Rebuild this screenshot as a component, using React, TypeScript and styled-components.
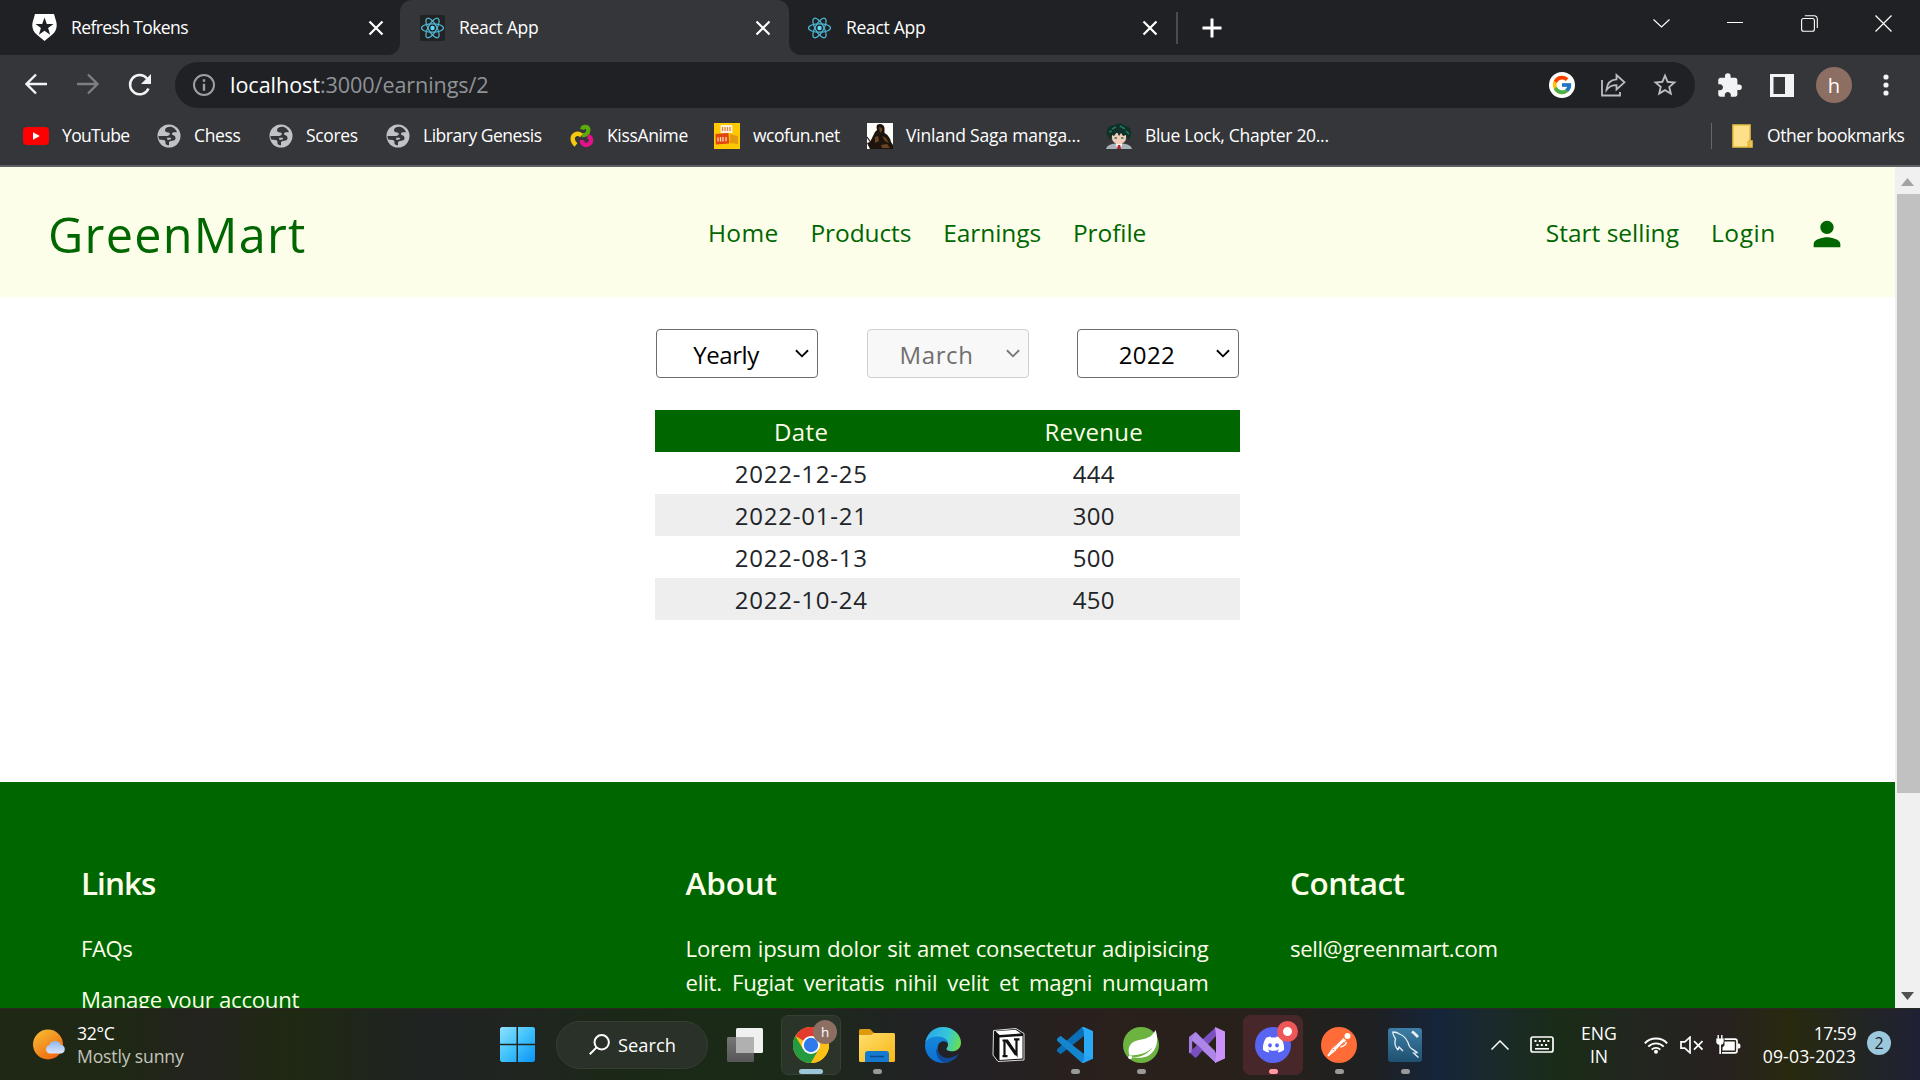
import React from "react";
import styled, { createGlobalStyle } from "styled-components";
import { FcGoogle } from "react-icons/fc";
import { FaDiscord } from "react-icons/fa";
import { MdExtension, MdPerson, MdStarBorder } from "react-icons/md";

const GREEN = "#006600";
const CREAM = "#fdfeea";

const GlobalStyle = createGlobalStyle`
  * { box-sizing: border-box; }
  body { margin: 0; overflow: hidden; }
  svg { display: block; flex: none; }
`;

const Screen = styled.div`
  width: 1920px;
  height: 1080px;
  display: flex;
  flex-direction: column;
  overflow: hidden;
  font-family: "Open Sans", "Noto Sans", sans-serif;
  background: #fff;
`;

const Label = styled.span<{ $ls?: number }>`
  letter-spacing: ${(p) => p.$ls ?? 0}px;
  white-space: nowrap;
`;

/* ---------- browser chrome ---------- */

const TabStrip = styled.div`
  height: 55px;
  display: flex;
  background: #35363a;
  color: #fff;
`;

const Tab = styled.div<{ $w: number; $side: "left" | "right" }>`
  width: ${(p) => p.$w}px;
  height: 55px;
  display: flex;
  align-items: center;
  padding: 0 ${(p) => (p.$side === "left" ? "16px 0 32px" : "17px 0 18px")};
  background: #202124;
  border-radius: ${(p) => (p.$side === "left" ? "0 0 12px 0" : "0 0 0 12px")};
  font-size: 17.5px;
  line-height: 54px;
`;

const TabEdge = styled.div`
  display: flex;
  background: #202124;
`;

const ActiveTab = styled.div`
  width: 389px;
  height: 55px;
  display: flex;
  align-items: center;
  padding: 0 18px 0 20px;
  background: #35363a;
  border-radius: 12px 12px 0 0;
  font-size: 17.5px;
  line-height: 54px;
`;

const TabTitle = styled(Label)`
  flex: 1;
  margin-left: 14px;
  height: 55px;
`;

const TabTools = styled.div`
  flex: 1;
  display: flex;
  align-items: center;
  background: #202124;
`;

const TabDivider = styled.div`
  width: 2px;
  height: 32px;
  background: #4b4c50;
  margin: 0 24px 0 1px;
`;

const WindowButtons = styled.div`
  margin-left: auto;
  display: grid;
  grid-template-columns: 74px 74px 74px 74px;
  justify-items: center;
  align-items: center;
  height: 46px;
  align-self: flex-start;
`;

const Toolbar = styled.div`
  height: 60px;
  padding-left: 25px;
  display: flex;
  align-items: center;
  background: #35363a;
`;

const NavButtons = styled.div`
  width: 150px;
  display: flex;
  gap: 29.5px;
`;

const Omnibox = styled.div`
  width: 1520px;
  height: 46px;
  border-radius: 23px;
  padding: 0 16px 0 17px;
  display: flex;
  align-items: center;
  background: #202124;
  font-size: 21.6px;
  line-height: 46px;
  color: #8f9398;
`;

const Host = styled(Label)`
  margin-left: 14px;
  color: #fff;
`;

const OmniActions = styled.div`
  margin-left: auto;
  display: flex;
  align-items: center;
  gap: 25px;
`;

const GoogleChip = styled.div`
  width: 26px;
  height: 26px;
  margin-right: 1px;
  border-radius: 50%;
  background: #fff;
  display: grid;
  place-items: center;
`;

const ToolbarActions = styled.div`
  flex: 1;
  padding-left: 21px;
  display: flex;
  align-items: center;
`;

const PanelWrap = styled.div`
  margin: 0 22px 0 27px;
`;

const Avatar = styled.div<{ $size: number }>`
  width: ${(p) => p.$size}px;
  height: ${(p) => p.$size}px;
  border-radius: 50%;
  background: #8d6e63;
  color: #fff;
  text-align: center;
  font-size: ${(p) => p.$size * 0.56}px;
  line-height: ${(p) => p.$size}px;
`;

const MenuDots = styled.svg`
  margin-left: 31px;
`;

const BookmarksBar = styled.div`
  height: 52px;
  padding: 0 0 9px 23px;
  display: flex;
  align-items: center;
  background: #35363a;
  color: #fff;
  font-size: 17.5px;
  line-height: 41px;
  border-bottom: 2px solid #5f6065;
`;

const Bookmark = styled.div<{ $w: number }>`
  width: ${(p) => p.$w}px;
  height: 41px;
  display: flex;
  align-items: center;
  gap: 13px;
`;

const BookmarkDivider = styled.div`
  width: 1px;
  height: 26px;
  margin: 0 20px 0 auto;
  background: #66676b;
`;

const OtherBookmarks = styled.div`
  width: 188px;
  height: 41px;
  display: flex;
  align-items: center;
  gap: 14px;
`;

/* ---------- web page ---------- */

const Viewport = styled.div`
  height: 841px;
  display: flex;
  overflow: hidden;
`;

const Page = styled.div`
  width: 1895px;
  height: 841px;
  display: flex;
  flex-direction: column;
  overflow: hidden;
`;

const Header = styled.header`
  height: 130px;
  flex: none;
  display: flex;
  align-items: center;
  background: ${CREAM};
  color: ${GREEN};
  font-size: 24.5px;
`;

const Brand = styled.h1`
  width: 662px;
  margin: 0;
  padding: 4px 0 0 48px;
  font-size: 48.5px;
  font-weight: 400;
  line-height: 127px;
  letter-spacing: 1.3px;
`;

const Nav = styled.nav<{ $end?: boolean }>`
  display: flex;
  align-items: center;
  gap: 32px;
  padding-top: 2px;
  line-height: 128px;
  ${(p) => (p.$end ? "margin-left: auto; padding-right: 48px;" : "padding-left: 46px;")}
`;

const AccountIcon = styled.span`
  margin: 2px 0 0 -1px;
`;

const Main = styled.main`
  width: 585px;
  height: 485px;
  flex: none;
  margin-left: 655px;
  padding-top: 32px;
`;

const Filters = styled.div`
  display: flex;
  justify-content: space-between;
  padding: 0 1px;
  margin-bottom: 32px;
`;

const Select = styled.div<{ $disabled?: boolean }>`
  width: 162px;
  height: 49px;
  display: flex;
  align-items: center;
  padding-right: 8px;
  border: 1px solid ${(p) => (p.$disabled ? "#cfcfcf" : "#6c6c6c")};
  border-radius: 4px;
  background: ${(p) => (p.$disabled ? "#f8f8f8" : "#fff")};
  color: ${(p) => (p.$disabled ? "#6f6f6f" : "#000")};
  font-size: 24px;
  line-height: 46px;
`;

const SelectValue = styled(Label)`
  flex: 1;
  text-align: center;
  padding-top: 2px;
`;

const Table = styled.div`
  display: grid;
  grid-auto-rows: 42px;
  font-size: 24px;
  line-height: 43px;
  color: #212529;
`;

const Row = styled.div<{ $tone?: "head" | "shade" }>`
  display: grid;
  grid-template-columns: 1fr 1fr;
  text-align: center;
  background: ${(p) => (p.$tone === "head" ? GREEN : p.$tone === "shade" ? "#eeeeee" : "#fff")};
  color: ${(p) => (p.$tone === "head" ? CREAM : "inherit")};
`;

const Footer = styled.footer`
  height: 226px;
  flex: none;
  display: grid;
  grid-template-columns: 523px 523px 523px;
  column-gap: 81.5px;
  align-items: start;
  padding: 76px 0 0 81px;
  background: ${GREEN};
  color: ${CREAM};
  font-size: 22.2px;
  line-height: 34px;
  overflow: hidden;
`;

const FooterTitle = styled.h2`
  margin: 0 0 24px;
  font-size: 31.5px;
  font-weight: 600;
  line-height: 50px;
`;

const FooterLine = styled.p`
  margin: 0 0 17px;
`;

const FooterText = styled.p`
  margin: 0;
  text-align: justify;
  text-align-last: justify;
  letter-spacing: -0.2px;
`;

const Scrollbar = styled.div`
  width: 25px;
  display: flex;
  flex-direction: column;
  align-items: center;
  background: #f0f0f0;
  padding: 11px 0 8px;
`;

const Thumb = styled.div`
  width: 23px;
  height: 599px;
  margin: 8px 0 auto 2px;
  background: #c1c1c1;
`;

/* ---------- taskbar ---------- */

const Taskbar = styled.div`
  height: 72px;
  display: flex;
  align-items: center;
  color: #fff;
  font-size: 17.6px;
  border-top: 1px solid #2b2a22;
  background: linear-gradient(90deg, #1f2815 0, #1f2715 130px, #24231f 200px, #1f2912 290px, #1f2322 430px,
    #202520 520px, #1b2817 620px, #1b2a18 780px, #222126 940px, #2a201c 1110px, #272119 1250px, #1f2022 1370px,
    #15253a 1440px, #1a2a2c 1490px, #1a2c17 1560px, #22261f 1640px, #272120 1720px, #29290f 1790px,
    #222620 1850px, #1f2134 1920px);
`;

const Weather = styled.div`
  width: 484px;
  padding-left: 33px;
  display: flex;
  align-items: center;
  gap: 10px;
`;

const TwoLines = styled.div<{ $align?: string; $w?: number }>`
  display: flex;
  flex-direction: column;
  text-align: ${(p) => p.$align ?? "left"};
  ${(p) => (p.$w ? `width: ${p.$w}px;` : "")}
  line-height: 23px;
`;

const Muted = styled(Label)`
  color: #c3c5bd;
`;

const Slot = styled.div<{ $w?: number }>`
  width: ${(p) => p.$w ?? 66}px;
  display: flex;
  justify-content: center;
`;

const SearchPill = styled.div`
  width: 152px;
  height: 48px;
  margin-left: 2px;
  padding-left: 32px;
  display: flex;
  align-items: center;
  gap: 8px;
  border: 1px solid #363d33;
  border-radius: 24px;
  background: #2a3128;
  font-size: 18.3px;
  line-height: 48px;
`;

const AppTile = styled.div<{ $bg?: string; $edge?: string }>`
  position: relative;
  width: 60px;
  height: 60px;
  display: flex;
  flex-direction: column;
  align-items: center;
  padding-top: 11px;
  border: 1px solid ${(p) => p.$edge ?? "transparent"};
  border-radius: 7px;
  background: ${(p) => p.$bg ?? "transparent"};
`;

const Indicator = styled.div<{ $w?: number; $color?: string }>`
  width: ${(p) => p.$w ?? 9}px;
  height: 5px;
  margin-top: 6px;
  border-radius: 3px;
  background: ${(p) => p.$color ?? "#999"};
`;

const TileBadge = styled.div`
  position: absolute;
  top: 4px;
  right: 3px;
`;

const RecordDot = styled.div`
  width: 21px;
  height: 21px;
  margin: 1px 1px 0 0;
  border: 6px solid #ef5658;
  border-radius: 50%;
  background: #fff;
`;

const Disc = styled.div<{ $color: string }>`
  width: 36px;
  height: 36px;
  border-radius: 50%;
  background: ${(p) => p.$color};
  display: grid;
  place-items: center;
`;

const MySqlWrap = styled.div`
  height: 36px;
  padding-top: 1px;
`;

const Tray = styled.div`
  flex: 1;
  display: flex;
  align-items: center;
`;

const TrayIcon = styled.div<{ $ml: number }>`
  margin-left: ${(p) => p.$ml}px;
`;

const Notice = styled.div`
  width: 24px;
  height: 24px;
  margin: -3px 0 0 11px;
  border-radius: 50%;
  background: #9cc8dd;
  color: #1a1a1a;
  text-align: center;
  font-size: 16px;
  line-height: 24px;
`;

/* ---------- drawings ---------- */

const CloseX = () => (
  <svg width="16" height="16" viewBox="0 0 16 16" stroke="#fff" strokeWidth="2.2">
    <path d="M1.5 1.5l13 13M14.5 1.5l-13 13" />
  </svg>
);

const AuthShield = () => (
  <svg width="25" height="27" viewBox="0 0 25 27">
    <path d="M3 0h19l2.300 8c1.200 5-.5 9.500-4 12.500L12.500 27l-7.800-6.500C1.200 17.500-.5 13 .7 8z" fill="#fff" />
    <path d="M12.500 3.500l2.300 6.500h6.700l-5.400 4.100 2 6.700-5.600-4-5.600 4 2-6.700L3.500 10h6.700z" fill="#202124" />
  </svg>
);

const ReactLogo = ({ boxed }: { boxed?: boolean }) => (
  <svg width="25" height="26" viewBox="-12.500 -13 25 26">
    {boxed && <rect x="-12.500" y="-13" width="25" height="26" rx="2" fill="#222" />}
    <circle r="2.200" fill="#61dafb" />
    <g fill="none" stroke="#4fb9d6" strokeWidth="1.200">
      <ellipse rx="11" ry="4.200" />
      <ellipse rx="11" ry="4.200" transform="rotate(60)" />
      <ellipse rx="11" ry="4.200" transform="rotate(120)" />
    </g>
  </svg>
);

const ArrowIcon = ({ flip, color }: { flip?: boolean; color: string }) => (
  <svg width="22" height="22" viewBox="0 0 22 22" fill="none" stroke={color} strokeWidth="2.400">
    <path d={flip ? "M0 11h20M11 1.500l9.500 9.500-9.500 9.500" : "M22 11H2M11 1.500L1.500 11l9.500 9.500"} />
  </svg>
);

const ReloadIcon = () => (
  <svg width="24" height="24" viewBox="0 0 24 24">
    <path d="M20.500 15.500A9.600 9.600 0 1 1 19 5.500" fill="none" stroke="#f1f3f4" strokeWidth="2.500" />
    <path d="M23 1v10H13z" fill="#f1f3f4" />
  </svg>
);

const InfoIcon = () => (
  <svg width="24" height="24" viewBox="0 0 24 24">
    <circle cx="12" cy="12" r="10" fill="none" stroke="#9aa0a6" strokeWidth="2" />
    <path d="M10.800 6.300h2.400v2.400h-2.400zM10.800 10.700h2.400v7h-2.400z" fill="#9aa0a6" />
  </svg>
);

const ShareIcon = () => (
  <svg width="25" height="24" viewBox="0 0 25 24" fill="none" stroke="#b9bcc0" strokeWidth="1.800">
    <path d="M1 7v15.500h18V19" />
    <path d="M5.500 17C6 10 9.500 6.600 15.500 6.300V2l8 7.300-8 7.200v-4.300c-4.500 0-7.500 1.300-10 4.800z" />
  </svg>
);

const Globe = () => (
  <svg width="24" height="24" viewBox="0 0 24 24">
    <circle cx="12" cy="12" r="11.500" fill="#bfc3c8" />
    <path
      d="M14 2.800C10.500 2.500 8 4 8 6.300c0 1.500 1.200 2 3 2.200 1.700.2 2.300 1 1.500 2.200-.6.900-1.800 1.300-3.500 1.300H1.500c0 1.500.3 2.500.8 3.500l4.200.5c1.500.2 2 1 2 2.300V20c1 .8 2 1.200 3.500 1.300V19c0-1.200.8-1.800 2-2l2.500-.5c1.500-.4 2.200-1.400 2-2.800-.2-1.300-1-2-2.300-2.400-1.400-.5-1.500-1.500-.6-2.500.8-.9 2.500-.6 4.400-.6-1-2.800-3-4.500-6-5.400z"
      fill="#35363a"
    />
    <path d="M10 13.800h3.200c1.300 0 1.300 1.500 0 1.700l-2.700.5z" fill="#bfc3c8" />
  </svg>
);

const YouTubeIcon = () => (
  <svg width="26" height="18" viewBox="0 0 26 18">
    <rect width="26" height="18" rx="4" fill="#f00" />
    <path d="M10 5.200v7.600l6.800-3.800z" fill="#fff" />
  </svg>
);

const KissIcon = () => (
  <svg width="25" height="24" viewBox="-1 0 25 24" fill="none" strokeWidth="4.400">
    <path d="M12 5.500C13 1.800 18.500 1.800 18.300 6.500c-.2 3.500-3.500 5-6.300 4.500" stroke="#5bab0a" />
    <path d="M17.500 12.500c4.500.5 4.500 5.500 1.500 7.500-3.500 2.200-7.500 0-7-4" stroke="#e3128b" />
    <path d="M11.500 11.500C7.500 8 2.500 10.500 2.700 15c.1 2.500 1.500 4.500 3.300 6" stroke="#f6c90e" />
  </svg>
);

const WcoIcon = () => (
  <svg width="26" height="26" viewBox="0 0 26 26">
    <rect width="26" height="26" fill="#ffc800" />
    <rect x="6.500" y="2" width="12" height="8" rx="1" fill="#fff0d8" />
    <path d="M8.500 4v4M11 4v4M13.500 4v4M16 4v4" stroke="#d98142" strokeWidth="1.300" />
    <path d="M1.500 11l13-1 .8 10.500-13.500 1z" fill="#e2460f" />
    <path d="M4 18.500v-4M6.500 18.500v-4.500M9 18.500V14M12 18.300V14" stroke="#ffd9b0" strokeWidth="1.300" />
    <path d="M16 11l8 2v8l-8-1z" fill="#e39a10" />
  </svg>
);

const VinlandIcon = () => (
  <svg width="26" height="26" viewBox="0 0 26 26">
    <rect width="26" height="26" fill="#fdfdfb" />
    <path d="M10 2c3-2 7-.5 7.500 3v5c4 2 6 6 6.500 9l2 3v4H3l-3-6 3-1 3-6 2-4 2-2-.5-3z" fill="#1d150d" />
    <path d="M12 4l3 1v3l-2 2zM15 13l4 2 3 5-4-2zM8 14l3-1 1 5-4 2zM14 22l6-1 3 4h-8z" fill="#6b4521" />
    <path d="M0 14l5 7" stroke="#1d150d" strokeWidth="1.200" />
  </svg>
);

const BlueLockIcon = () => (
  <svg width="26" height="26" viewBox="0 0 26 26">
    <path d="M0 26c1-4 5-5 9-5.500h8c4 .5 8 1.500 9 5.500z" fill="#a9b2b8" />
    <path d="M10 19h6v4l-3 3-3-3z" fill="#f4f4f4" />
    <path d="M12 22h2.200l.8 4h-4z" fill="#b3202a" />
    <path d="M6 10h14v5c0 4-4 6-7 6s-7-2-7-6z" fill="#f0cdb8" />
    <path d="M1 12C-.5 6 4 1.500 9 2c3-2.500 8-1.500 10 1 5 0 7 5 6 9l-2 5-3-5-3 1-2-3-2 3-2-4-3 4-2-1-2 5z" fill="#10302a" />
    <path d="M6 6l4-2M14 3l5 3M20 8l3 3M3 9l3-1" stroke="#1f7a56" strokeWidth="1.500" />
    <path d="M8.500 15h2.500M15 15h2.500" stroke="#27745a" strokeWidth="1.600" />
  </svg>
);

const FolderMark = () => (
  <svg width="21" height="24" viewBox="0 0 21 24">
    <path d="M1 1h17v16h2v6H1z" fill="#ffe08a" stroke="#e9c044" strokeWidth="1.600" />
    <path d="M16 23v-5.500l2-1.500v6z" fill="#f2cb55" stroke="#d9a92b" />
  </svg>
);

const SidePanelIcon = () => (
  <svg width="24" height="23" viewBox="0 0 24 23">
    <path d="M0 0h24v23H0zM3.500 3v17H15V3z" fill="#f1f3f4" fillRule="evenodd" />
  </svg>
);

const Chevron = ({ color = "#000" }: { color?: string }) => (
  <svg width="14" height="9" viewBox="0 0 15 9" fill="none" stroke={color} strokeWidth="2">
    <path d="M1 1l6.500 6.500L14 1" />
  </svg>
);

const Triangle = ({ down }: { down?: boolean }) => (
  <svg width="13" height="8" viewBox="0 0 13 8">
    <path d={down ? "M0 0h13L6.500 8z" : "M0 8h13L6.500 0z"} fill={down ? "#505050" : "#a3a3a3"} />
  </svg>
);

const SunCloud = () => (
  <svg width="34" height="32" viewBox="0 0 34 32">
    <defs>
      <linearGradient id="sun" x1="0" y1="0" x2=".7" y2="1">
        <stop offset="0" stopColor="#f6c235" />
        <stop offset="1" stopColor="#f0670f" />
      </linearGradient>
      <linearGradient id="cloud" x1="0" y1="0" x2="0" y2="1">
        <stop offset="0" stopColor="#8fb4ef" />
        <stop offset="1" stopColor="#dbe7fb" />
      </linearGradient>
    </defs>
    <circle cx="15" cy="15.500" r="15" fill="url(#sun)" />
    <path d="M16.500 24.500a4.400 4.400 0 0 1 0-8.600c1-5 9.500-5.300 11.300-.2a4.500 4.500 0 0 1 .7 8.800z" fill="url(#cloud)" />
  </svg>
);

const WindowsLogo = () => (
  <svg width="35" height="35" viewBox="0 0 35 35">
    <defs>
      <linearGradient id="win" gradientUnits="userSpaceOnUse" x1="0" y1="0" x2="35" y2="35">
        <stop offset="0" stopColor="#8fe0ff" />
        <stop offset=".5" stopColor="#3fc2fb" />
        <stop offset="1" stopColor="#0a93f7" />
      </linearGradient>
    </defs>
    <path d="M1.500 0h15v16.800H0V1.500zM18 0h15.500L35 1.500v15.300H18zM0 18.300h16.500V35h-15L0 33.500zM18 18.300h17v15.200L33.500 35H18z" fill="url(#win)" />
  </svg>
);

const SearchGlyph = () => (
  <svg width="21" height="21" viewBox="0 0 21 21" fill="none" stroke="#fff" strokeWidth="2">
    <circle cx="12.700" cy="8.300" r="7.200" />
    <path d="M7.600 13.400L.8 20.200" />
  </svg>
);

const TaskView = () => (
  <svg width="36" height="34" viewBox="0 0 36 34">
    <defs>
      <linearGradient id="tv" x1="0" y1="0" x2="0" y2="1">
        <stop offset="0" stopColor="#777" />
        <stop offset="1" stopColor="#555" />
      </linearGradient>
    </defs>
    <rect y="9" width="27" height="25" rx="1.500" fill="url(#tv)" />
    <rect x="9" width="27" height="25" rx="1.500" fill="#f0f0f0" />
    <path d="M9 9h18v16H9z" fill="#b0b0b0" />
  </svg>
);

const ChromeLogo = () => (
  <svg width="36" height="36" viewBox="0 0 36 36">
    <circle cx="18" cy="18" r="18" fill="#fbc116" />
    <path d="M18 18L2.410 9A18 18 0 0 1 33.590 9H18z" fill="#e33b2e" />
    <path d="M2.410 9A18 18 0 0 0 18 36l7.800-13.500L18 18l-7.800 4.500z" fill="#249a41" />
    <path d="M18 9h15.600A18 18 0 0 1 18 36l7.800-13.500z" fill="#fbc116" />
    <circle cx="18" cy="18" r="9" fill="#fff" />
    <circle cx="18" cy="18" r="7.200" fill="#2f7bee" />
  </svg>
);

const ExplorerIcon = () => (
  <svg width="36" height="36" viewBox="0 0 36 36">
    <defs>
      <linearGradient id="fold" x1="0" y1="0" x2="1" y2="1">
        <stop offset="0" stopColor="#ffdd6e" />
        <stop offset="1" stopColor="#f8b814" />
      </linearGradient>
    </defs>
    <path d="M0 3.500Q0 2 1.500 2H11l4 4v4H0z" fill="#dd9a0a" />
    <path d="M0 8h12l3-2h19.500Q36 6 36 7.500v26q0 1.500-1.500 1.500h-33Q0 35 0 33.500z" fill="url(#fold)" />
    <path d="M6 35v-8q0-3 3-3h18q3 0 3 3v8z" fill="#1479cf" />
    <path d="M11 29.500h14" stroke="#0b4a8c" strokeWidth="1.500" />
  </svg>
);

const EdgeLogo = () => (
  <svg width="36" height="36" viewBox="0 0 36 36">
    <defs>
      <linearGradient id="edgeTop" x1="0" y1=".4" x2="1" y2=".6">
        <stop offset="0" stopColor="#2aa6ea" />
        <stop offset=".6" stopColor="#35c8d8" />
        <stop offset="1" stopColor="#6be04a" />
      </linearGradient>
      <linearGradient id="edgeLow" x1="0" y1="0" x2="0" y2="1">
        <stop offset="0" stopColor="#1488dc" />
        <stop offset="1" stopColor="#0d6fd0" />
      </linearGradient>
    </defs>
    <path d="M0 17C1 7 8.500 0 18 0c10.500 0 18 8 18 15.500 0 5.500-4 8.800-9 8.800-4 0-5.500-1.300-5.500-2.500 0-1 1.500-1.600 1.500-4.300 0-4-4-7.500-10-7.500C6 10 2 13 0 17z" fill="url(#edgeTop)" />
    <path d="M0 18C1 12.500 6 9.500 12.500 9.500c5.500 0 10 3 10.500 7-2-3-8-3.500-10 2-1.500 6 2 13.500 9 17C10 38-.5 29.500 0 18z" fill="url(#edgeLow)" />
    <path d="M12.500 20c-.5 8 7 12.500 13.500 10.500 3-.8 5.500-2 7.500-3.500-2 4.500-7 8.500-13.500 9-7-2-11-11-7.500-16z" fill="#114a94" />
  </svg>
);

const NotionLogo = () => (
  <svg width="36" height="36" viewBox="0 0 36 36">
    <path d="M2.500 3.500L25 1.500l8 5V33l-26 1.500-5-6.500z" fill="#111" stroke="#ddd" strokeWidth="1" />
    <path d="M4.500 4.200L24.500 2.700l5.500 3.800-21.500 1.600z" fill="#fff" />
    <path d="M8.500 10.500L31.500 9v22.500l-23 1.500z" fill="#fff" />
    <path d="M13.500 29V13.500h2.800L25.500 27V12.500M11.500 13.500h5M23 12.300h5.500M11.500 29.200h5" fill="none" stroke="#111" strokeWidth="2.200" />
    <path d="M13.500 13.500l3-.3 10 14.500-2.500.8z" fill="#111" />
  </svg>
);

const CodeLogo = () => (
  <svg width="36" height="36" viewBox="0 0 36 36">
    <path d="M27 9L3.500 27.200 0 24.300v-2L24.500.5 27 0z" fill="#0b6fb8" />
    <path d="M27 27L3.500 8.800 0 11.700v2l24.500 21.800L27 36z" fill="#1486d0" />
    <path d="M26.500 0L36 4.200v27.600L26.500 36 24.500 35.200 27 33V3l-2.500-2.200z" fill="#27a3f2" />
    <path d="M27 9v18L36 31.800V4.200L26.500 0z" fill="#2aa9f5" />
  </svg>
);

const SpringLogo = () => (
  <svg width="36" height="36" viewBox="0 0 36 36">
    <circle cx="18" cy="18" r="18" fill="#6db33f" />
    <path d="M32.500 3c3.500 9 1.500 20-6 25-5.500 3.500-12.500 3-18 2.500 10 0 17-4 21-10-5 5-10.500 7.500-23 8C3.500 20 8 14.500 16 13c7-1.200 13-2.500 16.500-10z" fill="#fff" />
    <circle cx="7.200" cy="30.300" r="1.900" fill="#fff" />
  </svg>
);

const StudioLogo = () => (
  <svg width="36" height="36" viewBox="0 0 36 36">
    <path d="M0 10l6.500-5L10 7.500v21L6.500 31 0 26z" fill="#52338f" />
    <path d="M0 10l6.500-5L27 26v10L3.500 14.500v11L0 26z" fill="#a57be0" />
    <path d="M6.500 31L27 9V0L2.500 22.500v4.200z" fill="#7a50c0" />
    <path d="M6.500 5L26 24l1 12L2.500 12z" fill="#ae86e8" />
    <path d="M26 0l10 4.500v27L26 36l1-7V8z" fill="#c992f7" />
    <path d="M3.300 14v8.500l4.500-4.300z" fill="#272119" />
  </svg>
);

const PostmanFigure = () => (
  <svg width="24" height="24" viewBox="0 0 24 24">
    <circle cx="20.500" cy="3" r="3" fill="#fff" />
    <path d="M16.500 5l2.500 2.500L8 18.500l-1-2.500-2.500-.5z" fill="#fff" />
    <path d="M5 17l2 1.200L1 23zM19 9c.5 2-2 4-5.500 5" fill="none" stroke="#fff" strokeWidth="1.500" />
    <path d="M14.500 6.500L6 15M17 9l-8 8" stroke="#ff6c37" strokeWidth=".8" />
  </svg>
);

const MySqlLogo = () => (
  <svg width="34" height="34" viewBox="0 0 34 34">
    <defs>
      <linearGradient id="sea" x1="0" y1="0" x2="0" y2="1">
        <stop offset="0" stopColor="#3d7fa8" />
        <stop offset="1" stopColor="#1f506f" />
      </linearGradient>
    </defs>
    <rect width="34" height="34" rx="3" fill="url(#sea)" />
    <path
      d="M10 22c-3.500-4-3.500-8-2.500-11C6 8 4 5 5 4c2.500 0 4.500.5 6.500 2 6 2 8.500 7.500 10 12.500 1.500 2.500 5 3.500 7.500 6l-3.500.5 5 4.500M10 22l1-3 4 4"
      fill="none"
      stroke="#e6f0f6"
      strokeWidth="1.300"
    />
    <path d="M24 3.500l2.500 2L30 9" stroke="#e6f0f6" strokeWidth="2.800" fill="none" />
  </svg>
);

const KeyboardIcon = () => (
  <svg width="24" height="17" viewBox="0 0 24 17">
    <rect x="1" y="1" width="22" height="15" rx="2" fill="none" stroke="#fff" strokeWidth="1.700" />
    <path d="M4.500 5h15" stroke="#fff" strokeWidth="2" strokeDasharray="2 2.300" />
    <path d="M6.500 9h12" stroke="#fff" strokeWidth="2" strokeDasharray="2 2.300" />
    <path d="M5 12.800h14" stroke="#fff" strokeWidth="1.600" />
  </svg>
);

const WifiIcon = () => (
  <svg width="24" height="18" viewBox="0 0 24 18" fill="none" stroke="#fff" strokeWidth="1.900">
    <path d="M.8 7.300a15.500 15.500 0 0 1 22.400 0M4.300 10.600a10.800 10.800 0 0 1 15.400 0M7.700 13.600a6.200 6.200 0 0 1 8.600 0" />
    <circle cx="12" cy="15.700" r="2" fill="#fff" stroke="none" />
  </svg>
);

const MutedSpeaker = () => (
  <svg width="24" height="18" viewBox="0 0 24 18" fill="none" stroke="#fff" strokeWidth="1.700">
    <path d="M1 5.800h3.800L10 1.200v15.600l-5.200-4.600H1z" />
    <path d="M14 5.200l8.500 8.500M22.500 5.200L14 13.700" />
  </svg>
);

const BatteryIcon = () => (
  <svg width="25" height="20" viewBox="0 0 25 20">
    <path d="M8.500 4.200h10.500a2 2 0 0 1 2 2v9.600a2 2 0 0 1-2 2H6" fill="none" stroke="#fff" strokeWidth="1.700" />
    <path d="M8.500 6.500h10.300v9H6.500v-3l2-2z" fill="#fff" />
    <path d="M21.500 8.500H23q1.500 0 1.500 2.500T23 13.500h-1.500z" fill="#fff" />
    <path d="M2.200 0v4M5.800 0v4" stroke="#fff" strokeWidth="1.400" />
    <path d="M.3 3.500h7.400v3.300q0 2.500-2.700 3V19H3.300V9.800Q.3 9.300.3 6.800z" fill="#fff" />
  </svg>
);

/* ---------- data ---------- */

const bookmarks: { label: string; w: number; ls: number; icon: React.ReactNode }[] = [
  { label: "YouTube", w: 134, ls: -0.65, icon: <YouTubeIcon /> },
  { label: "Chess", w: 112, ls: -0.35, icon: <Globe /> },
  { label: "Scores", w: 117, ls: -0.35, icon: <Globe /> },
  { label: "Library Genesis", w: 183, ls: -0.48, icon: <Globe /> },
  { label: "KissAnime", w: 145, ls: -0.35, icon: <KissIcon /> },
  { label: "wcofun.net", w: 153, ls: -0.45, icon: <WcoIcon /> },
  { label: "Vinland Saga manga...", w: 239, ls: -0.2, icon: <VinlandIcon /> },
  { label: "Blue Lock, Chapter 20...", w: 240, ls: -0.3, icon: <BlueLockIcon /> },
];

const earnings = [
  ["2022-12-25", "444"],
  ["2022-01-21", "300"],
  ["2022-08-13", "500"],
  ["2022-10-24", "450"],
];

const pinned: { name: string; icon: React.ReactNode; running?: boolean }[] = [
  { name: "explorer", icon: <ExplorerIcon />, running: true },
  { name: "edge", icon: <EdgeLogo /> },
  { name: "notion", icon: <NotionLogo /> },
  { name: "code", icon: <CodeLogo />, running: true },
  { name: "spring", icon: <SpringLogo />, running: true },
  { name: "studio", icon: <StudioLogo /> },
];

export default function App() {
  return (
    <Screen>
      <GlobalStyle />
      <TabStrip>
        <Tab $w={400} $side="left">
          <AuthShield />
          <TabTitle $ls={-0.6}>Refresh Tokens</TabTitle>
          <CloseX />
        </Tab>
        <TabEdge>
          <ActiveTab>
            <ReactLogo boxed />
            <TabTitle $ls={-0.3}>React App</TabTitle>
            <CloseX />
          </ActiveTab>
        </TabEdge>
        <Tab $w={386} $side="right">
          <ReactLogo />
          <TabTitle $ls={-0.3}>React App</TabTitle>
          <CloseX />
        </Tab>
        <TabTools>
          <TabDivider />
          <svg width="20" height="20" viewBox="0 0 20 20" stroke="#fff" strokeWidth="3">
            <path d="M10 .5v19M.5 10h19" />
          </svg>
          <WindowButtons>
            <svg width="17" height="9" viewBox="0 0 17 9" fill="none" stroke="#fff" strokeWidth="1.100">
              <path d="M.5.5l8 7.500 8-7.500" />
            </svg>
            <svg width="16" height="2" viewBox="0 0 16 2">
              <path d="M0 .5h16" stroke="#fff" />
            </svg>
            <svg width="17" height="17" viewBox="0 0 17 17" fill="none" stroke="#fff" strokeWidth="1.100">
              <rect x=".6" y="3.500" width="12.800" height="12.800" rx="2" />
              <path d="M3.800.7H13a3.300 3.300 0 0 1 3.300 3.300v9" />
            </svg>
            <svg width="17" height="17" viewBox="0 0 17 17" stroke="#fff" strokeWidth="1.200">
              <path d="M.5.5l16 16M16.500.5l-16 16" />
            </svg>
          </WindowButtons>
        </TabTools>
      </TabStrip>

      <Toolbar>
        <NavButtons>
          <ArrowIcon color="#f1f3f4" />
          <ArrowIcon flip color="#7d7e82" />
          <ReloadIcon />
        </NavButtons>
        <Omnibox>
          <InfoIcon />
          <Host $ls={-0.05}>localhost</Host>
          <Label $ls={-0.1}>:3000/earnings/2</Label>
          <OmniActions>
            <GoogleChip>
              <FcGoogle size={22} />
            </GoogleChip>
            <ShareIcon />
            <MdStarBorder size={28} color="#b9bcc0" />
          </OmniActions>
        </Omnibox>
        <ToolbarActions>
          <MdExtension size={27} color="#f1f3f4" />
          <PanelWrap>
            <SidePanelIcon />
          </PanelWrap>
          <Avatar $size={36}>h</Avatar>
          <MenuDots width="6" height="26" viewBox="0 0 6 26">
            <g fill="#f1f3f4">
              <circle cx="3" cy="5" r="2.600" />
              <circle cx="3" cy="13" r="2.600" />
              <circle cx="3" cy="21" r="2.600" />
            </g>
          </MenuDots>
        </ToolbarActions>
      </Toolbar>

      <BookmarksBar>
        {bookmarks.map((b) => (
          <Bookmark key={b.label} $w={b.w}>
            {b.icon}
            <Label $ls={b.ls}>{b.label}</Label>
          </Bookmark>
        ))}
        <BookmarkDivider />
        <OtherBookmarks>
          <FolderMark />
          <Label $ls={-0.42}>Other bookmarks</Label>
        </OtherBookmarks>
      </BookmarksBar>

      <Viewport>
        <Page>
          <Header>
            <Brand>GreenMart</Brand>
            <Nav>
              <Label $ls={0.3}>Home</Label>
              <Label $ls={-0.1}>Products</Label>
              <Label $ls={-0.1}>Earnings</Label>
              <Label $ls={-0.1}>Profile</Label>
            </Nav>
            <Nav $end>
              <Label>Start selling</Label>
              <Label $ls={0.6}>Login</Label>
              <AccountIcon>
                <MdPerson size={40} />
              </AccountIcon>
            </Nav>
          </Header>
          <Main>
            <Filters>
              <Select>
                <SelectValue $ls={-0.4}>Yearly</SelectValue>
                <Chevron />
              </Select>
              <Select $disabled>
                <SelectValue $ls={0.6}>March</SelectValue>
                <Chevron color="#757575" />
              </Select>
              <Select>
                <SelectValue $ls={0.4}>2022</SelectValue>
                <Chevron />
              </Select>
            </Filters>
            <Table>
              <Row $tone="head">
                <Label $ls={0.4}>Date</Label>
                <Label $ls={0.25}>Revenue</Label>
              </Row>
              {earnings.map(([date, revenue], i) => (
                <Row key={date} $tone={i % 2 ? "shade" : undefined}>
                  <Label $ls={0.8}>{date}</Label>
                  <Label $ls={0.2}>{revenue}</Label>
                </Row>
              ))}
            </Table>
          </Main>
          <Footer>
            <div>
              <FooterTitle>
                <Label $ls={-1}>Links</Label>
              </FooterTitle>
              <FooterLine>
                <Label $ls={-0.5}>FAQs</Label>
              </FooterLine>
              <FooterLine>
                <Label $ls={-0.28}>Manage your account</Label>
              </FooterLine>
            </div>
            <div>
              <FooterTitle>
                <Label $ls={-0.15}>About</Label>
              </FooterTitle>
              <FooterText>
                Lorem ipsum dolor sit amet consectetur adipisicing elit. Fugiat veritatis nihil velit et magni numquam
              </FooterText>
            </div>
            <div>
              <FooterTitle>
                <Label $ls={-0.5}>Contact</Label>
              </FooterTitle>
              <FooterLine>
                <Label $ls={-0.35}>sell@greenmart.com</Label>
              </FooterLine>
            </div>
          </Footer>
        </Page>
        <Scrollbar>
          <Triangle />
          <Thumb />
          <Triangle down />
        </Scrollbar>
      </Viewport>

      <Taskbar>
        <Weather>
          <SunCloud />
          <TwoLines>
            <Label $ls={-0.3}>32°C</Label>
            <Muted $ls={-0.15}>Mostly sunny</Muted>
          </TwoLines>
        </Weather>
        <Slot>
          <WindowsLogo />
        </Slot>
        <Slot $w={162}>
          <SearchPill>
            <SearchGlyph />
            <Label>Search</Label>
          </SearchPill>
        </Slot>
        <Slot>
          <TaskView />
        </Slot>
        <Slot>
          <AppTile $bg="#2a3429" $edge="#363f35">
            <ChromeLogo />
            <Indicator $w={24} $color="#9dc6db" />
            <TileBadge>
              <Avatar $size={24}>h</Avatar>
            </TileBadge>
          </AppTile>
        </Slot>
        {pinned.map((app) => (
          <Slot key={app.name}>
            <AppTile>
              {app.icon}
              {app.running && <Indicator />}
            </AppTile>
          </Slot>
        ))}
        <Slot>
          <AppTile $bg="#47272a" $edge="#47272a">
            <Disc $color="#5865f2">
              <FaDiscord size={23} color="#fff" />
            </Disc>
            <Indicator $color="#ff99a4" />
            <TileBadge>
              <RecordDot />
            </TileBadge>
          </AppTile>
        </Slot>
        <Slot>
          <AppTile>
            <Disc $color="#ff6c37">
              <PostmanFigure />
            </Disc>
            <Indicator />
          </AppTile>
        </Slot>
        <Slot>
          <AppTile>
            <MySqlWrap>
              <MySqlLogo />
            </MySqlWrap>
            <Indicator />
          </AppTile>
        </Slot>
        <Tray>
          <TrayIcon $ml={53}>
            <svg width="18" height="10" viewBox="0 0 18 10" fill="none" stroke="#fff" strokeWidth="1.500">
              <path d="M.5 9.500L9 1l8.500 8.500" />
            </svg>
          </TrayIcon>
          <TrayIcon $ml={21}>
            <KeyboardIcon />
          </TrayIcon>
          <TrayIcon $ml={25}>
            <TwoLines $align="center" $w={40}>
              <Label>ENG</Label>
              <Label>IN</Label>
            </TwoLines>
          </TrayIcon>
          <TrayIcon $ml={25}>
            <WifiIcon />
          </TrayIcon>
          <TrayIcon $ml={12}>
            <MutedSpeaker />
          </TrayIcon>
          <TrayIcon $ml={12}>
            <BatteryIcon />
          </TrayIcon>
          <TrayIcon $ml={15}>
            <TwoLines $align="right" $w={100}>
              <Label $ls={-0.5}>17:59</Label>
              <Label $ls={0.15}>09-03-2023</Label>
            </TwoLines>
          </TrayIcon>
          <Notice>2</Notice>
        </Tray>
      </Taskbar>
    </Screen>
  );
}
